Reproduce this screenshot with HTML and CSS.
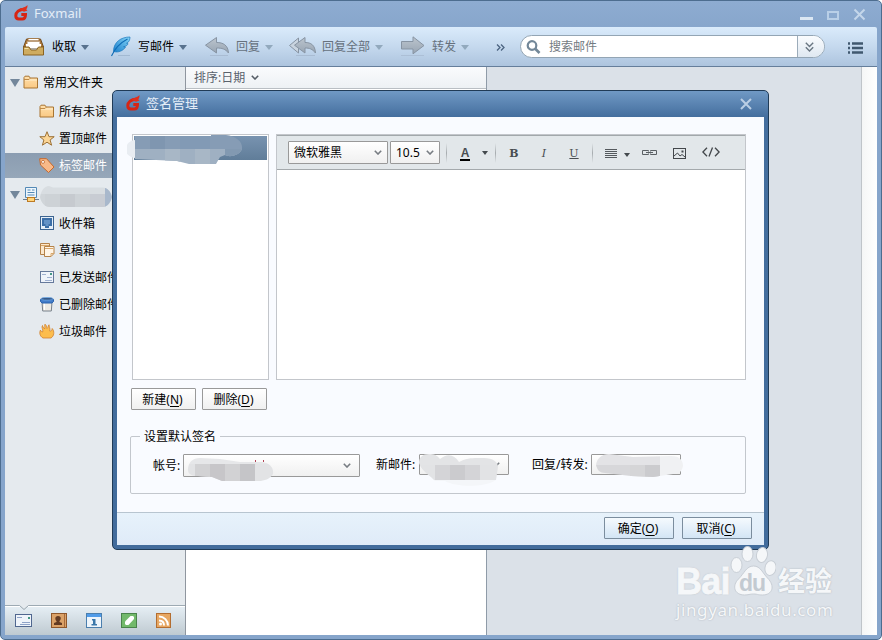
FILE: index.html
```html
<!DOCTYPE html>
<html lang="zh-CN">
<head>
    <meta charset="UTF-8">
    <title>Foxmail</title>
    <link rel="stylesheet" href="styles.css">
</head>
<body>

<svg class="defs" width="0" height="0">
    <defs>
        <linearGradient id="gray" x1="0" y1="0" x2="0" y2="1"><stop offset="0" stop-color="#bcc5ce"/><stop offset="1" stop-color="#98a5b3"/></linearGradient>
        <linearGradient id="folderFill" x1="0" y1="0" x2="0" y2="1"><stop offset="0" stop-color="#ffe0ac"/><stop offset="1" stop-color="#fac983"/></linearGradient>
        <linearGradient id="featherFill" x1="1" y1="0" x2="0" y2="1"><stop offset="0" stop-color="#85d5f7"/><stop offset="1" stop-color="#1c80cc"/></linearGradient>
        <symbol id="logo" viewBox="0 0 14 16">
            <path d="M10.500 4.300C5 4.300 1.800 7 1.800 10.800c0 2.200 1 3.200 3 3.200h3.400c2.200 0 3.300-1.700 3.300-4.500H7.300" fill="none" stroke="#d72413" stroke-width="3"/>
            <path d="M13.400 0c.3 2-.2 3.300-1.200 4.200l1.300 1.300-3.500 1.300-4.500-2C7 2.500 12 2.500 13.400 0z" fill="#e0301d"/>
        </symbol>
        <symbol id="folder" viewBox="0 0 16 14"><path d="M1 12.500V2l1-1.300h4L7.200 2.500h7.300v10z" fill="url(#folderFill)" stroke="#a87532"/><path d="M2 4.500h12" stroke="#fff0d0"/><path d="M1 4h5l1.500-1.500" fill="none" stroke="#c08a45"/></symbol>
        <symbol id="chevron" viewBox="0 0 8 5"><path d="M.8.800 4 4 7.200.800" fill="none" stroke="currentColor" stroke-width="1.600"/></symbol>
        <symbol id="close" viewBox="0 0 12 12"><path d="M1 1l10 10M11 1 1 11" stroke="currentColor" stroke-width="2"/></symbol>
    </defs>
</svg>

<div class="window">
    <header class="titlebar">
        <svg class="logo"><use href="#logo"/></svg>
        <span class="title">Foxmail</span>
        <svg class="window-buttons" viewBox="0 0 66 14">
            <rect x="0" y="9" width="13" height="3" fill="#dbe7f3"/>
            <rect x="28" y="4" width="10" height="7" fill="none" stroke="#b9cfe7" stroke-width="2"/>
            <path d="M54.500 1.500l10 10M64.500 1.500l-10 10" stroke="#c4d6ea" stroke-width="2"/>
        </svg>
    </header>

    <nav class="toolbar">
        <div class="tool">
            <svg width="29" height="22" viewBox="0 0 29 22">
                <path d="M3.500 3h14l3 8H.500z" fill="#b6803e" stroke="#70491c"/>
                <path d="M4 5h13v7H4zM5 2.500h11V5H5z" fill="#fff" stroke="#9a6b35" stroke-width=".8"/>
                <path d="M3 8h15v4H3z" fill="#fff"/>
                <path d="M.500 11h5.500l2 3h5.500l2-3h5v8H.500z" fill="#cfac60" stroke="#8a6321"/>
                <path d="M1.500 12.500h4" stroke="#f6e2a5"/>
            </svg>
            <span>收取</span><i class="caret"></i>
        </div>
        <div class="tool write">
            <svg width="28" height="22" viewBox="0 0 28 22">
                <path d="M8 19.500h12" stroke="#8ba4bf" opacity=".5"/>
                <path d="M20 1C11 1 3.500 6 3.500 15.500c5 1.500 10-1 12-4.500l-2-.3c3-.4 4-1.600 4.500-3l-1.500-.4c2.500-1 3.500-3.500 3.500-6.300z" fill="url(#featherFill)" stroke="#1877bd" stroke-width=".7"/>
                <path d="M1.500 20C5 12 10 7 17.500 3" fill="none" stroke="#0e6bb5" stroke-width="1.100"/>
            </svg>
            <span>写邮件</span><i class="caret"></i>
        </div>
        <div class="tool reply disabled">
            <svg width="32" height="22" viewBox="0 0 32 22">
                <path d="M12.500 1.500v5C19 6.500 24 9 24.500 17c-3-4-6.500-5-12-5v5L1.500 9.200z" fill="url(#gray)" stroke="#8794a3"/>
                <path d="M6 19.500h18" stroke="#9fb1c7" opacity=".6"/>
            </svg>
            <span>回复</span><i class="caret"></i>
        </div>
        <div class="tool reply-all disabled">
            <svg width="34" height="22" viewBox="0 0 34 22">
                <path d="M10.500 2 1.500 9.500l9 7.500z" fill="#c9d4df" stroke="#8794a3"/>
                <path d="M17 1.500v5C23 6.500 27 9 27.500 17c-3-4-6-5-10.500-5v5L6.500 9.200z" fill="url(#gray)" stroke="#8794a3"/>
                <path d="M8 19.500h19" stroke="#9fb1c7" opacity=".6"/>
            </svg>
            <span>回复全部</span><i class="caret"></i>
        </div>
        <div class="tool forward disabled">
            <svg width="32" height="22" viewBox="0 0 32 22">
                <path d="M1.500 5.500H13V.800L24 9.500 13 17.800V13H1.500z" fill="url(#gray)" stroke="#8794a3"/>
                <path d="M1 19.500h23" stroke="#9fb1c7" opacity=".5"/>
            </svg>
            <span>转发</span><i class="caret"></i>
        </div>
        <svg class="more" width="9" height="7" viewBox="0 0 9 7"><path d="M1 .500 4 3.500 1 6.500M5 .500l3 3-3 3" fill="none" stroke="#4b6480" stroke-width="1.300"/></svg>
        <div class="search">
            <svg class="lens" width="15" height="14" viewBox="0 0 15 14"><circle cx="6" cy="5.500" r="4.300" fill="none" stroke="#738899" stroke-width="2.200"/><path d="M9 8.500l4.500 4.500" stroke="#738899" stroke-width="2.600"/></svg>
            <span class="placeholder">搜索邮件</span>
            <span class="expand"><svg width="9" height="10" viewBox="0 0 9 10"><path d="M.800.800 4.500 4.500 8.200.800M.800 5.300 4.500 9l3.700-3.700" fill="none" stroke="#697682" stroke-width="1.400"/></svg></span>
        </div>
        <svg class="menu" width="15" height="12" viewBox="0 0 15 12"><path d="M0 1.500h2M4 1.500h11M0 6h2M4 6h11M0 10.500h2M4 10.500h11" stroke="#40586f" stroke-width="2.600"/></svg>
    </nav>

    <div class="content">
        <aside class="sidebar">
            <ul class="folders">
                <li class="group"><i class="expander"></i><svg class="icon"><use href="#folder"/></svg>常用文件夹</li>
                <li><svg class="icon"><use href="#folder"/></svg>所有未读</li>
                <li>
                    <svg class="icon" viewBox="0 0 16 15"><path d="M8 .700l2 5h5.200l-4.100 3.300 1.500 5.200L8 11.200l-4.600 3L4.900 9 .800 5.700H6z" fill="#fbd595" stroke="#9c7136"/></svg>置顶邮件
                </li>
                <li class="active">
                    <svg class="icon" viewBox="0 0 16 15"><path d="M.700.700h6.800l7.500 8.300-5.500 5.500L1.500 7z" fill="#f8b988" stroke="#c8682a"/><circle cx="4" cy="3.900" r="1.500" fill="#fff" stroke="#bd6428" stroke-width=".8"/></svg>标签邮件
                </li>
                <li class="group account">
                    <i class="expander"></i>
                    <svg class="icon" viewBox="0 0 16 15"><path d="M2.500.500h11v10h-11z" fill="#edf6fc" stroke="#5389b6"/><path d="M4.500 3h3M9 3h2.500M4.500 5.500h7M4.500 8h7" stroke="#5389b6"/><path d="M0 12.500h16" stroke="#6c7e90"/><rect x="4.500" y="10.500" width="7" height="4" fill="#ffd47b" stroke="#bd7b24"/></svg>
                    <svg class="blur-name" width="72" height="22" viewBox="0 0 72 22">
                        <clipPath id="nameClip"><path d="M0 11C1 5 4 0 9 0l4 1.500h50c4 0 8 4 9 9.500-1 5-4 9-8 10H10C5 21 1 17 0 11z"/></clipPath>
                        <g clip-path="url(#nameClip)"><path d="M0 0h72v8H0z" fill="#d8dde1"/><path d="M0 8h72v14H0z" fill="#d0d5d9"/><path d="M5 8h15v14H5zM35 8h15v14H35z" fill="#cdd2d6"/><path d="M20 8h15v14H20z" fill="#c6cacf"/><path d="M50 8h15v14H50z" fill="#c8ccd3"/><path d="M65 0h7v22h-7z" fill="#a8b8cc"/></g>
                    </svg>
                </li>
                <li>
                    <svg class="icon" viewBox="0 0 16 15"><rect x="1.500" y=".5" width="13" height="13" fill="#e5eff8" stroke="#3c6490"/><path d="M3 2h10v8h-3v2H6v-2H3z" fill="#3c6fa7"/><path d="M5 4h6v4H9.500v2h-3V8H5z" fill="#6493c6"/></svg>收件箱
                </li>
                <li>
                    <svg class="icon" viewBox="0 0 16 15"><path d="M1.500.500h9v11h-9z" fill="#fbe8cc" stroke="#b48249"/><path d="M5.500 3.500h9.500v7l-3 3H5.500z" fill="#fff5e6" stroke="#b48249"/><path d="M12 13.500v-3h3M2 2.500h8M6 5.500h8" fill="none" stroke="#d7a669"/></svg>草稿箱
                </li>
                <li>
                    <svg class="icon" viewBox="0 0 16 15"><rect x="1.500" y="1.500" width="13" height="11" fill="#eef3fa" stroke="#65799b"/><path d="M3 4.500h4M8 7.500h5M6 10.500h7" stroke="#9fb1d0"/><path d="M11 3h2v2h-2z" fill="#449883"/></svg>已发送邮件
                </li>
                <li>
                    <svg class="icon" viewBox="0 0 16 15"><path d="M3 5h10l-.7 9H3.700z" fill="#eceae4" stroke="#78818b"/><path d="M5.500 6v7" stroke="#fff"/><path d="M1.500 2.500h13v2l-1.500 1.500H3L1.500 4.500z" fill="#427cc8" stroke="#2961ac"/><ellipse cx="8" cy="1.800" rx="6" ry="1.400" fill="#365a88" stroke="#6fa8e6" stroke-width=".8"/></svg>已删除邮件
                </li>
                <li>
                    <svg class="icon" viewBox="0 0 16 15"><path d="M4 14C.5 12 .3 8.500 1.500 6c.5 1.300 1.200 2 2.200 2C4.500 5.500 2 3.500 3.500 1.500c.2 1.800 1.500 2 2 3.500C6.500 3.500 5 2 6 .200 7.700 1.500 7.500 3 8 4.500 9.500 3.500 8.500 2.500 10 .8c0 2 1.500 3.500.7 6.200 1.300.3 2.300-.5 2.500-2.500 2.500 3 2 7.500-1.200 9.500z" fill="#fcbd4d" stroke="#d18230" stroke-width=".8"/></svg>垃圾邮件
                </li>
            </ul>
            <div class="modules">
                <svg class="notch" width="10" height="5" viewBox="0 0 10 5"><path d="M0 0l5 4.500L10 0z" fill="#e5eaee"/><path d="M.500.500l4.500 4 4.500-4" fill="none" stroke="#98a4ad"/></svg>
                <svg viewBox="0 0 17 16"><rect x=".5" y="1.500" width="16" height="12" fill="#eff4fa" stroke="#50678f"/><path d="M2 4.500h5M7 9.500h8M5 11.500h10" stroke="#8ea3c8"/><path d="M13 4h2v2h-2z" fill="#449883"/></svg>
                <svg viewBox="0 0 17 16"><rect x="1.500" y=".5" width="15" height="14" fill="#dba268" stroke="#8e572b"/><path d="M14.500 1v13" stroke="#a56a3c"/><path d="M8 3c4 0 3 4 1.500 5v1l2.500 1v2H4v-2l2.500-1V8C5 7 4.500 3 8 3z" fill="#633b23"/></svg>
                <svg viewBox="0 0 17 16"><rect x="1.500" y=".5" width="15" height="14" fill="#eef5fb" stroke="#4b7fae"/><path d="M2 1h14v3H2z" fill="#519ce9"/><path d="M7 6h3.500v5H12v1.500H6.500V11H8V7.500H7z" fill="#3a77a9"/></svg>
                <svg viewBox="0 0 17 16"><rect x="1.500" y=".5" width="15" height="14" fill="#72b96b" stroke="#49834a"/><path d="M5 11V8.500L10.500 3H13l1 1v2l-5.500 6H6z" fill="#fff"/></svg>
                <svg viewBox="0 0 17 16"><rect x="1.500" y=".5" width="14" height="14" fill="#e7a762" stroke="#b36d30"/><circle cx="5.500" cy="11" r="1.500" fill="#fff"/><path d="M4 7.500c3 0 5 2 5 5M4 3.500c5 0 9 4 9 9" fill="none" stroke="#fff" stroke-width="2"/></svg>
            </div>
        </aside>
        <section class="mail-list">
            <div class="sort">排序:日期<svg class="chev"><use href="#chevron"/></svg></div>
        </section>
        <main class="reader"></main>
        <div class="edge"></div>
    </div>
</div>

<div class="dialog">
    <header class="dialog-title">
        <svg class="logo"><use href="#logo"/></svg>
        <span>签名管理</span>
        <svg class="dialog-close"><use href="#close"/></svg>
    </header>
    <div class="dialog-body">
        <div class="panes">
            <div class="signatures">
                <div class="signature-item"></div>
                <svg class="blur-signature" width="116" height="32" viewBox="0 0 116 32">
                    <path d="M8 6a9 9 0 0 0 0 18z" fill="#e9edf2"/>
                    <clipPath id="sigClip"><path d="M8 2h76v-1h15c9 1 17 6 16 14-2 6-12 9-17 6l-5 2-4 7H62L50 27 8 25z"/></clipPath>
                    <g clip-path="url(#sigClip)"><path d="M0 0h116v15H0z" fill="#869cb5"/><path d="M23 0h15v15H23z" fill="#7f96b0"/><path d="M53 0h30v15H53z" fill="#829ab5"/><path d="M0 15h116v17H0z" fill="#9fb0c2"/><path d="M38 15h15v17H38zM68 15h15v17H68z" fill="#a8b7c6"/><path d="M98 15h18v10H98z" fill="#8299b1"/></g>
                </svg>
            </div>
            <div class="editor">
                <div class="editor-bar">
                    <span class="select font-name">微软雅黑<svg class="chev"><use href="#chevron"/></svg></span>
                    <span class="select font-size">10.5<svg class="chev"><use href="#chevron"/></svg></span>
                    <i class="divider"></i>
                    <b class="color">A</b><i class="small-caret"></i>
                    <i class="divider second"></i>
                    <b class="format bold">B</b>
                    <em class="format italic">I</em>
                    <u class="format under">U</u>
                    <i class="divider third"></i>
                    <svg class="align" width="12" height="10" viewBox="0 0 12 10"><path d="M0 .500h12M0 2.500h12M0 4.500h12M0 6.500h12M0 8.500h12" stroke="#54595d"/></svg>
                    <i class="small-caret"></i>
                    <svg class="link" width="15" height="5" viewBox="0 0 15 5"><path d="M6.500 1.500V.500h-6v4h6v-1M8.500 1.500V.500h6v4h-6v-1M4 2.500h7" fill="none" stroke="#5b6064"/></svg>
                    <svg class="image" width="13" height="11" viewBox="0 0 13 11"><rect x=".5" y=".5" width="12" height="10" fill="none" stroke="#43474b"/><path d="M1 8l3.500-3L7 8l2-1.500L12 9" fill="none" stroke="#43474b"/><path d="M8.500 2.500h2v2h-2z" fill="#43474b"/></svg>
                    <svg class="code" width="18" height="10" viewBox="0 0 18 10"><path d="M5 .800.900 5 5 9.200M13 .800 17.100 5 13 9.200M10.500.500l-3.500 9" fill="none" stroke="#43474b" stroke-width="1.300"/></svg>
                </div>
            </div>
        </div>
        <div class="actions">
            <button class="button">新建(<u>N</u>)</button>
            <button class="button">删除(<u>D</u>)</button>
        </div>
        <fieldset class="defaults">
            <legend>设置默认签名</legend>
            <div class="fields">
                <label>帐号:</label>
                <span class="select account-select">
                    <svg class="chev"><use href="#chevron"/></svg>
                    <svg class="blur-field" width="90" height="26" viewBox="0 0 90 26">
                        <path d="M69.500 4v3M77.500 4v2" stroke="#b34457"/>
                        <clipPath id="accClip"><path d="M2 14C2 6 7 2 14 2l20 1 20 3h22c8 1 12 6 11 12-3 5-9 7-14 7H36l-10-4-14-1C6 20 2 18 2 14z"/></clipPath>
                        <g clip-path="url(#accClip)"><path d="M0 0h90v8H0z" fill="#e6e7e9"/><path d="M0 8h90v18H0z" fill="#e2e3e5"/><path d="M9 8h15v18H9zM39 8h15v18H39z" fill="#d2d2d4"/><path d="M24 8h15v18H24z" fill="#c7c6c9"/><path d="M54 8h15v18H54z" fill="#c5c5c8"/></g>
                    </svg>
                </span>
                <label class="new-label">新邮件:</label>
                <span class="select short">
                    <svg class="chev"><use href="#chevron"/></svg>
                    <svg class="blur-field" width="82" height="32" viewBox="0 0 82 32">
                        <clipPath id="newClip"><path d="M0 9C0 3 4 0 10 0c5 0 8 1 11 5 7-6 14-5 19 3 8-5 18-4 25-4 9 0 14 4 14 9l-2 13C68 33 38 34 26 27H16C12 22 3 18 0 9z"/></clipPath>
                        <g clip-path="url(#newClip)"><path d="M0 0h82v11H0z" fill="#e3e4e6"/><path d="M0 11h82v15H0z" fill="#e2e3e5"/><path d="M16 11h15v15H16zM46 11h15v15H46z" fill="#d4d4d7"/><path d="M31 11h15v15H31z" fill="#cbcbce"/><path d="M0 26h82v6H0z" fill="#f4f6f9"/></g>
                    </svg>
                </span>
                <label class="reply-label">回复/转发:</label>
                <span class="select short last">
                    <svg class="blur-field" width="90" height="26" viewBox="0 0 90 26">
                        <clipPath id="repClip"><path d="M0 11C1 4 6 0 13 0l24 3 38-1c7 0 12 3 12 10-1 6-5 8-10 8l-20 3-22-1-26-3C4 19 1 16 0 11z"/></clipPath>
                        <g clip-path="url(#repClip)"><path d="M0 0h64v11H0z" fill="#e3e3e6"/><path d="M0 11h64v15H0z" fill="#d7d7da"/><path d="M34 11h15v15H34z" fill="#d5d5d7"/><path d="M49 11h15v15H49z" fill="#cbcbce"/><path d="M64 0h26v26H64z" fill="#f0f1f3"/></g>
                    </svg>
                </span>
            </div>
        </fieldset>
    </div>
    <footer class="dialog-footer">
        <button class="button primary">确定(<u>O</u>)</button>
        <button class="button primary">取消(<u>C</u>)</button>
    </footer>
</div>

<div class="watermark">
    <div class="brand">
        <span class="bai">Bai</span>
        <span class="paw">
            <svg width="46" height="50" viewBox="0 0 46 50">
                <g fill="#f5f7f9" stroke="#c8ced5" stroke-width="1">
                    <ellipse cx="6.500" cy="19" rx="5.500" ry="7.500"/>
                    <ellipse cx="17.500" cy="8" rx="5.500" ry="7.500"/>
                    <ellipse cx="32" cy="9" rx="5.500" ry="7.500" transform="rotate(10 32 9)"/>
                    <ellipse cx="40.500" cy="22" rx="5.500" ry="7.500" transform="rotate(10 40 22)"/>
                    <path d="M23.500 20c7 0 9 7 14 12 8 8 5 17-5 17-5 0-5-1-9-1s-5 1-9 1c-10 0-13-9-6-16 6-6 8-13 15-13z"/>
                </g>
            </svg>
            <span class="du">du</span>
        </span>
        <span class="jingyan">经验</span>
    </div>
    <div class="site">jingyan.baidu.com</div>
</div>

</body>
</html>
```
FILE: styles.css
```css
* {
    box-sizing: border-box;
}
body {
    margin: 0;
    width: 882px;
    height: 640px;
    overflow: hidden;
    position: relative;
    background-color: #fff;
    color: #000;
    font-family: "Noto Sans", "Noto Sans CJK SC", sans-serif;
    font-size: 12px;
    line-height: 16px;
}
svg {
    display: block;
    flex: none;
}
.defs {
    position: absolute;
}
.window {
    display: flex;
    flex-direction: column;
    height: 640px;
    padding: 0 4px 4px;
    border: 1px solid #4d6d8f;
    border-radius: 5px;
    background: linear-gradient(#8eacd1, #86a5cb 30px);
}
.logo {
    width: 14px;
    height: 16px;
}
.titlebar {
    display: flex;
    height: 26px;
    padding: 4px 11px 0 9px;
}
.title {
    margin-left: 6px;
    line-height: 17px;
    font-size: 13px;
    color: #e4edf7;
}
.window-buttons {
    width: 66px;
    height: 14px;
    margin: 3px 0 0 auto;
}
.toolbar {
    display: flex;
    align-items: center;
    height: 40px;
    padding: 0 14px 0 18px;
    border-bottom: 1px solid #657e9b;
    border-radius: 2px 2px 0 0;
    background: linear-gradient(#daebfb, #c5d9ee 50%, #adc4de);
}
.tool {
    display: flex;
    align-items: center;
    white-space: nowrap;
}
.write {
    margin-left: 20px;
}
.reply,
.forward {
    margin-left: 16px;
}
.reply-all {
    margin-left: 14px;
}
.disabled {
    color: #66717d;
}
.caret {
    margin: 2px 1px 0 5px;
    border: 4px solid transparent;
    border-top: 5px solid #58728e;
    border-bottom: 0;
}
.disabled .caret {
    border-top-color: #92a9bd;
}
.more {
    margin: 2px 0 0 26px;
}
.search {
    display: flex;
    align-items: center;
    width: 305px;
    height: 23px;
    margin-left: 15px;
    padding-left: 5px;
    overflow: hidden;
    border: 1px solid #93a5b4;
    border-radius: 12px;
    background-color: #fff;
}
.placeholder {
    margin-left: 8px;
    color: #747b82;
}
.expand {
    display: flex;
    align-items: center;
    justify-content: center;
    width: 27px;
    height: 21px;
    margin-left: auto;
    padding-right: 3px;
    border-left: 1px solid #9cacba;
    background: linear-gradient(#fafcfe, #dfe8f1);
}
.menu {
    margin: 2px 0 0 auto;
}
.content {
    display: flex;
    flex: 1;
    background-color: #dbe1e8;
}
.sidebar {
    display: flex;
    flex-direction: column;
    width: 181px;
    border-right: 1px solid #8f969f;
    background-color: #e5eaee;
}
.folders {
    flex: 1;
    margin: 0;
    padding: 0;
    list-style: none;
}
.folders li {
    display: flex;
    align-items: center;
    height: 27px;
    padding-left: 34px;
}
.folders .group {
    height: 31px;
    padding-left: 5px;
}
.folders .active {
    height: 25px;
    margin: 1px 0;
    background: linear-gradient(#8b9db1, #96a7b9);
    color: #fff;
}
.icon {
    width: 16px;
    height: 15px;
    margin-right: 4px;
}
.group .icon {
    margin: 0 4px 0 3px;
}
.account .icon {
    margin-right: 1px;
}
.expander {
    border: 5px solid transparent;
    border-top: 8px solid #73879b;
    border-bottom: 0;
}
.blur-name {
    margin-top: 4px;
}
.modules {
    display: flex;
    position: relative;
    gap: 18px;
    height: 30px;
    padding: 7px 0 0 10px;
    border-top: 1px solid #9daab3;
    box-shadow: inset 0 1px #fff;
    background: linear-gradient(#e6eff5, #bfcad1);
}
.modules svg {
    width: 17px;
    height: 16px;
}
.modules .notch {
    position: absolute;
    left: 14px;
    top: -1px;
    width: 10px;
    height: 5px;
}
.mail-list {
    width: 301px;
    border-right: 1px solid #8f9ba8;
    background-color: #fff;
}
.sort {
    display: flex;
    align-items: center;
    height: 22px;
    padding-left: 8px;
    border-bottom: 1px solid #b9bec3;
    background: linear-gradient(#fafbfd, #edf1f4);
    color: #59626c;
}
.chev {
    width: 8px;
    height: 5px;
    color: #777c82;
}
.sort .chev {
    margin: -1px 0 0 6px;
    color: #555d65;
}
.reader {
    flex: 1;
}
.edge {
    width: 16px;
    border-left: 1px solid #bfc4c9;
    background: linear-gradient(90deg, #f5f6f6, #fff);
}
.dialog {
    display: flex;
    flex-direction: column;
    position: absolute;
    left: 112px;
    top: 90px;
    width: 657px;
    height: 460px;
    padding: 0 4px 4px;
    border: 1px solid #203b57;
    border-radius: 5px;
    background: linear-gradient(#7099c5, #446e9e 26px, #426c9c);
}
.dialog-title {
    display: flex;
    height: 26px;
    padding: 4px 12px 0 9px;
    color: #e5eef8;
    font-size: 13px;
}
.dialog-title span {
    margin-left: 6px;
}
.dialog-close {
    width: 12px;
    height: 12px;
    margin: 3px 0 0 auto;
    color: #bacee4;
}
.dialog-body {
    flex: 1;
    padding: 17px 18px 0 13px;
    background-color: #f9fbff;
}
.panes {
    display: flex;
    gap: 7px;
    height: 246px;
    padding-left: 2px;
}
.signatures {
    position: relative;
    width: 137px;
    padding: 1px;
    border: 1px solid #c3c6cb;
    background-color: #fff;
}
.signature-item {
    height: 24px;
    background: linear-gradient(#7893b0, #607d99);
}
.blur-signature {
    position: absolute;
    left: -6px;
    top: -1px;
}
.editor {
    flex: 1;
    border: 1px solid #c3c6cb;
    background-color: #fff;
}
.editor-bar {
    display: flex;
    align-items: center;
    height: 35px;
    padding-left: 11px;
    border-top: 1px solid #a2a8ab;
    border-bottom: 1px solid #a4a9ac;
    background-color: #e2e7ea;
    color: #484d51;
}
.select {
    display: flex;
    align-items: center;
    position: relative;
    height: 23px;
    padding: 0 5px;
    border: 1px solid #999;
    border-radius: 1px;
    background: linear-gradient(#fff, #f0f0f0);
    color: #000;
}
.select .chev {
    margin: -1px 0 0 auto;
}
.font-name {
    width: 100px;
}
.font-size {
    width: 50px;
    margin-left: 2px;
}
.divider {
    width: 1px;
    height: 20px;
    margin: 0 13px 0 6px;
    background: linear-gradient(#e2e7ea, #a6abae 50%, #e2e7ea);
}
.second {
    margin: 0 12px 0 7px;
}
.third {
    margin: 0 12px 0 12px;
}
.color {
    width: 10px;
    height: 14px;
    margin-top: 2px;
    border-bottom: 2px solid #000;
    font: bold 12px/13px "Liberation Sans", sans-serif;
    text-align: center;
}
.small-caret {
    margin: 0 0 0 12px;
    border: 3px solid transparent;
    border-top: 4px solid #44494d;
    border-bottom: 0;
}
.align + .small-caret {
    margin: 4px 0 0 7px;
}
.format {
    width: 12px;
    margin-top: 2px;
    font-family: "DejaVu Serif", serif;
    font-size: 11px;
    text-align: center;
}
.italic {
    margin-left: 18px;
}
.under {
    margin-left: 18px;
}
.align {
    margin-top: 2px;
}
.link {
    margin: 0 0 0 12px;
}
.image {
    margin: 2px 0 0 16px;
}
.code {
    margin: -1px 0 0 16px;
}
.actions {
    display: flex;
    gap: 6px;
    margin: 8px 0 0 1px;
}
.button {
    width: 65px;
    height: 22px;
    padding: 2px 2px 0 0;
    border: 1px solid #999;
    border-radius: 1px;
    background: linear-gradient(#fff, #f0f0f0);
    color: #000;
    font: inherit;
}
.button u {
    text-underline-offset: 2px;
}
.defaults {
    height: 66px;
    margin: 18px 0 0;
    padding: 0;
    border: 1px solid #c3c7cd;
    border-radius: 2px;
}
.defaults legend {
    height: 16px;
    margin-left: 9px;
    padding: 1px 4px 0;
}
.fields {
    display: flex;
    align-items: flex-start;
    height: 23px;
    margin-top: 10px;
    padding-left: 22px;
    white-space: nowrap;
}
.fields label {
    width: 30px;
    padding-top: 4px;
}
.account-select {
    width: 177px;
    padding-right: 8px;
}
.short {
    width: 90px;
    height: 21px;
    padding-right: 8px;
}
.fields .new-label {
    width: 43px;
    margin-left: 16px;
    padding-top: 3px;
}
.fields .reply-label {
    width: 59px;
    margin-left: 23px;
    padding-top: 3px;
}
.blur-field {
    position: absolute;
    left: 2px;
    top: 1px;
}
.short .blur-field {
    left: -1px;
    top: -1px;
}
.last .blur-field {
    left: 4px;
}
.dialog-footer {
    display: flex;
    justify-content: flex-end;
    gap: 8px;
    height: 33px;
    padding: 4px 12px 0 0;
    border-top: 1px solid #b8c5d0;
    background: linear-gradient(#e7f2fb, #dfebf8);
}
.primary {
    width: 70px;
    border-color: #7b8d9e;
    background: linear-gradient(#f5fafe, #d3e5f5);
}
.watermark {
    position: absolute;
    left: 676px;
    top: 546px;
    color: #f5f7f9;
    text-shadow: 0 0 2px #b4bbc3, 0 0 1px #c0c7ce;
    white-space: nowrap;
}
.brand {
    display: flex;
    align-items: flex-end;
    height: 52px;
    font-family: "Liberation Sans", "Noto Sans CJK SC", sans-serif;
    font-weight: bold;
}
.bai {
    width: 54px;
    font-size: 36px;
    line-height: 32px;
    letter-spacing: -0.8px;
    -webkit-text-stroke: 0.8px #f5f7f9;
}
.paw {
    position: relative;
    height: 52px;
}
.du {
    position: absolute;
    left: 9px;
    bottom: 2px;
    color: #c3cad1;
    font-size: 23px;
    line-height: 26px;
    letter-spacing: -1px;
    text-shadow: none;
}
.jingyan {
    margin-left: 2px;
    font-size: 27px;
    line-height: 32px;
}
.site {
    margin-top: 1px;
    font-size: 17px;
    line-height: 22px;
    letter-spacing: 0.6px;
}
```
